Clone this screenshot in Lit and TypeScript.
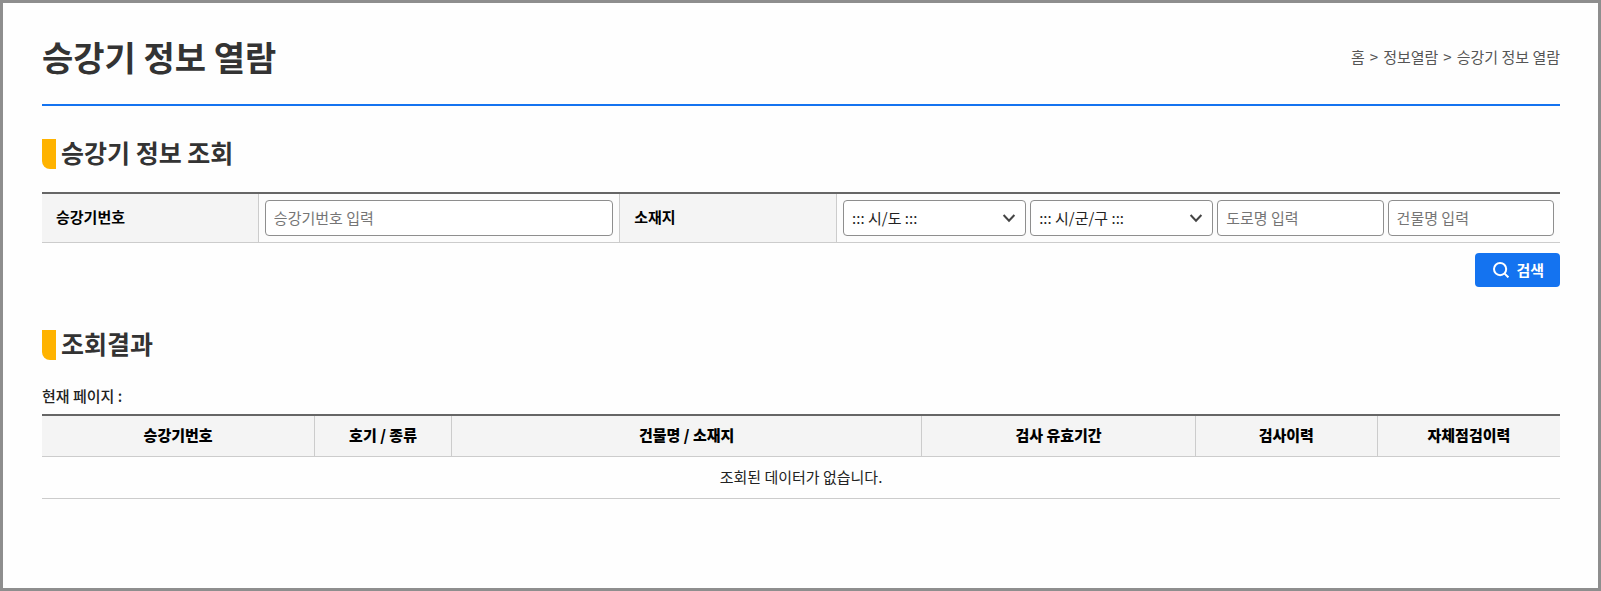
import { LitElement, html, css } from "lit";
import { customElement, property } from "lit/decorators.js";

const shared = css`
  *,
  *::before,
  *::after {
    box-sizing: border-box;
  }
  h1,
  h2,
  p {
    margin: 0;
  }
  table {
    width: 100%;
    table-layout: fixed;
    border-collapse: separate;
    border-spacing: 0;
    border-top: 2px solid #666;
  }
  th,
  td {
    border-bottom: 1px solid #ccc;
  }
  th {
    background: #f4f4f4;
    color: #000;
    font-weight: 700;
  }
`;

@customElement("section-title")
export class SectionTitle extends LitElement {
  static styles = [
    shared,
    css`
      :host {
        display: block;
      }
      .title {
        display: flex;
        align-items: flex-start;
        gap: 5px;
        font-size: 25px;
        line-height: 26px;
        font-weight: 700;
        color: #333;
      }
      .title::before {
        content: "";
        width: 14px;
        height: 30px;
        border-bottom-left-radius: 8px;
        background: #ffb300;
      }
    `,
  ];

  @property() label = "";

  render() {
    return html`<h2 class="title">${this.label}</h2>`;
  }
}

@customElement("search-form")
export class SearchForm extends LitElement {
  static styles = [
    shared,
    css`
      :host {
        display: block;
      }
      .col-label {
        width: 15%;
      }
      .col-number {
        width: 25%;
      }
      .col-place {
        width: 50%;
      }
      th {
        padding: 0 14px 2px;
        border-right: 1px solid #ccc;
        text-align: left;
      }
      td {
        padding: 6px;
        background: #fcfcfc;
      }
      td.divided {
        border-right: 1px solid #ccc;
      }
      .fields {
        display: grid;
        grid-template-columns: 11fr 11fr 10fr 10fr;
        gap: 4px;
      }
      input,
      select {
        display: block;
        width: 100%;
        min-width: 0;
        height: 36px;
        margin: 0;
        padding: 0 8px;
        border: 1px solid #8e8e8e;
        border-radius: 4px;
        background-color: #fff;
        color: #222;
        font: inherit;
      }
      input {
        padding-bottom: 2px;
      }
      input::placeholder {
        color: #757575;
        opacity: 1;
      }
      .select {
        min-width: 0;
        display: grid;
        align-items: center;
      }
      .select > * {
        grid-area: 1 / 1;
      }
      select {
        appearance: none;
        padding-right: 30px;
      }
      .chevron {
        justify-self: end;
        margin-right: 10px;
        pointer-events: none;
      }
      .actions {
        display: flex;
        justify-content: flex-end;
        margin-top: 10px;
      }
      button {
        display: flex;
        align-items: center;
        gap: 7px;
        height: 34px;
        padding: 0 16px 0 18px;
        border: 0;
        border-radius: 4px;
        background: #1473f0;
        color: #fff;
        font: inherit;
        font-weight: 700;
      }
    `,
  ];

  private renderSelect(name: string, option: string) {
    return html`<div class="select">
      <select name=${name} aria-label=${option}>
        <option>::: ${option} :::</option>
      </select>
      <svg class="chevron" width="14" height="10" viewBox="0 0 14 10" fill="none" stroke="#444" stroke-width="2" aria-hidden="true">
        <path d="M1.6 2 7 7.8 12.4 2" />
      </svg>
    </div>`;
  }

  render() {
    return html`
      <form @submit=${(e: Event) => e.preventDefault()}>
        <table>
          <colgroup>
            <col class="col-label" />
            <col class="col-number" />
            <col class="col-label" />
            <col class="col-place" />
          </colgroup>
          <tbody>
            <tr>
              <th scope="row"><label for="number">승강기번호</label></th>
              <td class="divided"><input id="number" type="text" placeholder="승강기번호 입력" /></td>
              <th scope="row">소재지</th>
              <td>
                <div class="fields">
                  ${this.renderSelect("sido", "시/도")} ${this.renderSelect("sigungu", "시/군/구")}
                  <input type="text" aria-label="도로명" placeholder="도로명 입력" />
                  <input type="text" aria-label="건물명" placeholder="건물명 입력" />
                </div>
              </td>
            </tr>
          </tbody>
        </table>
        <div class="actions">
          <button type="submit">
            <svg width="16" height="16" viewBox="0 0 16 16" fill="none" stroke="#fff" stroke-width="2" aria-hidden="true">
              <circle cx="7.1" cy="7.1" r="6.1" />
              <path d="m11.4 11.4 4 4" />
            </svg>
            <span>검색</span>
          </button>
        </div>
      </form>
    `;
  }
}

@customElement("result-table")
export class ResultTable extends LitElement {
  static styles = [
    shared,
    css`
      :host {
        display: block;
      }
      .page {
        margin-bottom: 6px;
        font-weight: 500;
        color: #222;
      }
      th,
      td {
        height: 41px;
        padding: 0 8px 2px;
        text-align: center;
      }
      tbody td {
        height: 42px;
      }
      th {
        font-weight: 900;
      }
      th:not(:last-child) {
        border-right: 1px solid #ccc;
      }
      .w18 {
        width: 18%;
      }
      .w9 {
        width: 9%;
      }
      .w31 {
        width: 31%;
      }
      .w12 {
        width: 12%;
      }
    `,
  ];

  private columns = [
    { label: "승강기번호", size: "w18" },
    { label: "호기 / 종류", size: "w9" },
    { label: "건물명 / 소재지", size: "w31" },
    { label: "검사 유효기간", size: "w18" },
    { label: "검사이력", size: "w12" },
    { label: "자체점검이력", size: "w12" },
  ];

  render() {
    return html`
      <p class="page">현재 페이지 :</p>
      <table>
        <thead>
          <tr>
            ${this.columns.map((c) => html`<th scope="col" class=${c.size}>${c.label}</th>`)}
          </tr>
        </thead>
        <tbody>
          <tr>
            <td colspan="6">조회된 데이터가 없습니다.</td>
          </tr>
        </tbody>
      </table>
    `;
  }
}

@customElement("app-root")
export class AppRoot extends LitElement {
  static styles = [
    shared,
    css`
      :host {
        display: block;
        box-sizing: border-box;
        min-height: 100vh;
        padding: 27px 38px 38px 39px;
        border: 3px solid #8e8e8e;
        background: #fefefe;
        color: #222;
        font-family: "Noto Sans CJK KR", "Noto Sans", sans-serif;
        font-size: 15px;
        line-height: 24px;
      }
      .head {
        display: flex;
        align-items: center;
        justify-content: space-between;
        padding-bottom: 20px;
        border-bottom: 2px solid #1473f0;
      }
      .head h1 {
        font-size: 34px;
        line-height: 54px;
        font-weight: 700;
        color: #333;
      }
      .crumbs {
        display: flex;
        gap: 5px;
        color: #555;
      }
      .crumbs a {
        color: inherit;
        text-decoration: none;
      }
      .search {
        margin-top: 33px;
      }
      search-form {
        margin-top: 23px;
      }
      .result {
        margin-top: 43px;
      }
      result-table {
        margin-top: 24px;
      }
    `,
  ];

  render() {
    return html`
      <header class="head">
        <h1>승강기 정보 열람</h1>
        <nav class="crumbs" aria-label="현재 위치">
          <a href="#">홈</a><span>&gt;</span><a href="#">정보열람</a><span>&gt;</span><a href="#">승강기 정보 열람</a>
        </nav>
      </header>
      <main>
        <section-title class="search" label="승강기 정보 조회"></section-title>
        <search-form></search-form>
        <section-title class="result" label="조회결과"></section-title>
        <result-table></result-table>
      </main>
    `;
  }
}
